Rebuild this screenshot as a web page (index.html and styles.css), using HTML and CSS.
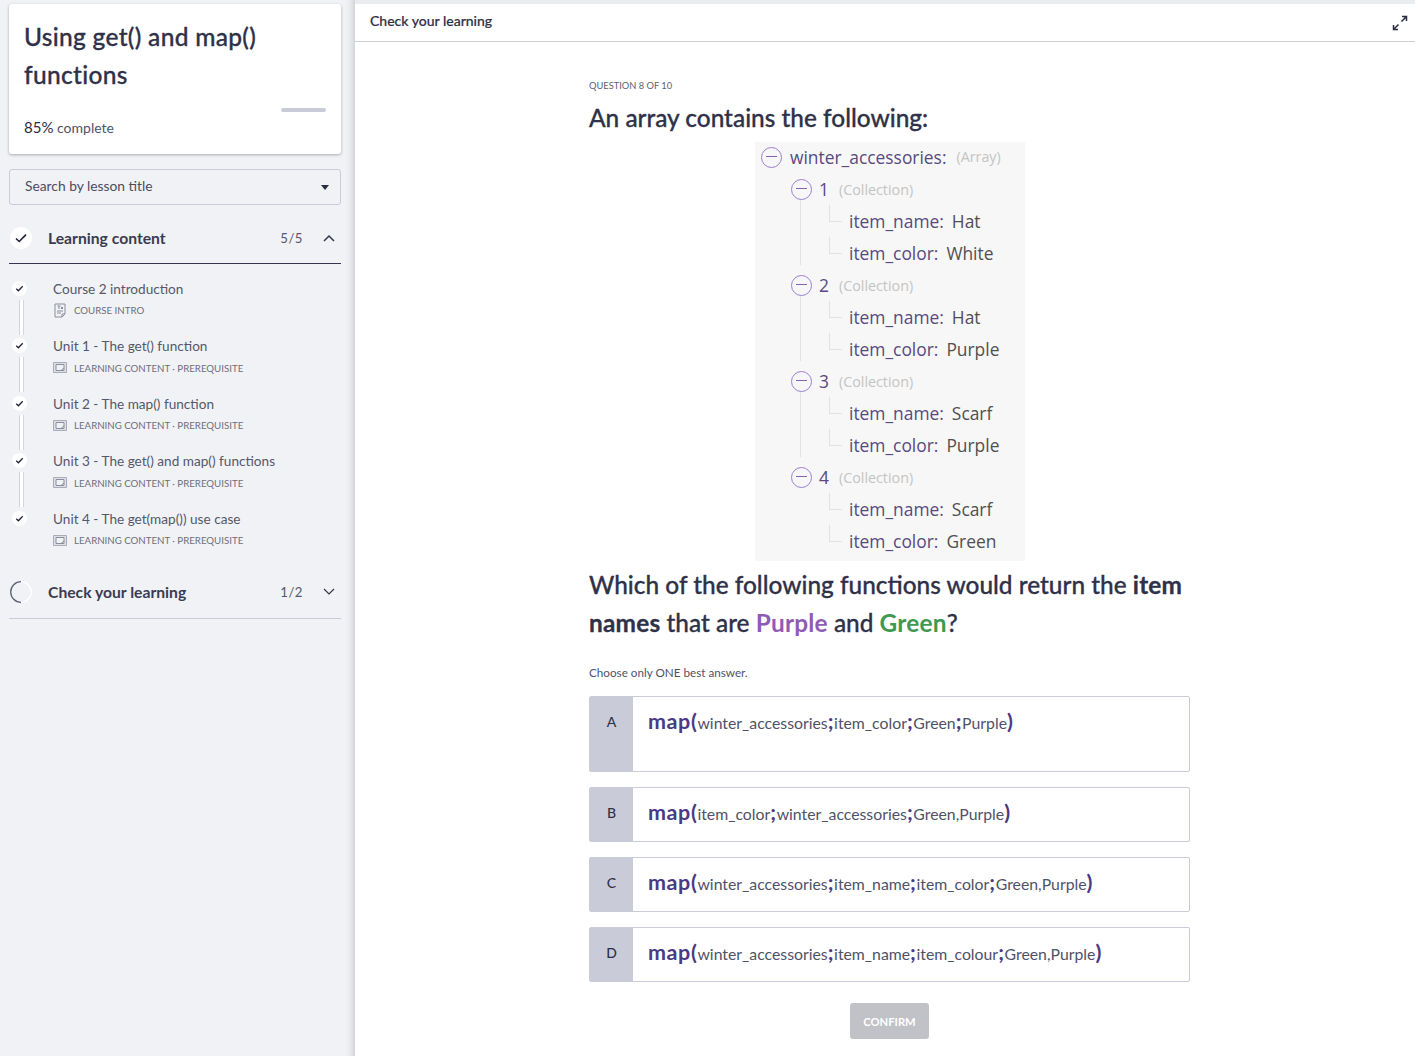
FILE: index.html
```html
<!DOCTYPE html>
<html lang="en">
<head>
    <meta charset="UTF-8">
    <title>Check your learning</title>
    <link rel="stylesheet" href="styles.css">
</head>
<body>
    <aside class="sidebar">
        <div class="course-card">
            <h1>Using get() and map() functions</h1>
            <div class="progress"><span class="progress-rest"></span></div>
            <p class="progress-text"><b>85%</b> complete</p>
        </div>
        <div class="search">
            <span>Search by lesson title</span>
            <i class="caret"></i>
        </div>

        <div class="section-head open">
            <span class="status done">
                <svg width="14" height="14" viewBox="0 0 14 14"><path d="M2 7.5l3.2 3L12 3.6" fill="none" stroke="#1d1f33" stroke-width="1.6"/></svg>
            </span>
            <span class="section-title">Learning content</span>
            <span class="section-count">5/5</span>
            <svg class="chevron" width="14" height="10" viewBox="0 0 14 10"><path d="M2 8l5-5 5 5" fill="none" stroke="#33364d" stroke-width="1.5"/></svg>
        </div>
        <ul class="lessons">
            <li>
                <span class="dot"><svg width="9" height="9" viewBox="0 0 14 14"><path d="M2 7.5l3.2 3L12 3.6" fill="none" stroke="#1d1f33" stroke-width="2"/></svg></span>
                <div class="lesson-title">Course 2 introduction</div>
                <div class="lesson-meta">
                    <svg width="14" height="15" viewBox="0 0 14 15"><path d="M2 1h10v10l-3 3H2z M9 14v-3h3 M4 8h6 M4 10h4 M4.5 3h3 M6 3v3 M8 4l2 2 M10 4l-2 2" fill="none" stroke="#8b8d9e" stroke-width="1"/></svg>
                    <span>COURSE INTRO</span>
                </div>
            </li>
            <li>
                <span class="dot"><svg width="9" height="9" viewBox="0 0 14 14"><path d="M2 7.5l3.2 3L12 3.6" fill="none" stroke="#1d1f33" stroke-width="2"/></svg></span>
                <div class="lesson-title">Unit 1 - The get() function</div>
                <div class="lesson-meta">
                    <svg width="14" height="11" viewBox="0 0 14 11"><path d="M.5.5h13v10H.5z" fill="#dfe0e6" stroke="#a9abb9"/><path d="M3 2.5h8v6H3z M8 8.5l3-2.5" fill="#f1f2f5" stroke="#8b8d9e"/></svg>
                    <span>LEARNING CONTENT · PREREQUISITE</span>
                </div>
            </li>
            <li>
                <span class="dot"><svg width="9" height="9" viewBox="0 0 14 14"><path d="M2 7.5l3.2 3L12 3.6" fill="none" stroke="#1d1f33" stroke-width="2"/></svg></span>
                <div class="lesson-title">Unit 2 - The map() function</div>
                <div class="lesson-meta">
                    <svg width="14" height="11" viewBox="0 0 14 11"><path d="M.5.5h13v10H.5z" fill="#dfe0e6" stroke="#a9abb9"/><path d="M3 2.5h8v6H3z M8 8.5l3-2.5" fill="#f1f2f5" stroke="#8b8d9e"/></svg>
                    <span>LEARNING CONTENT · PREREQUISITE</span>
                </div>
            </li>
            <li>
                <span class="dot"><svg width="9" height="9" viewBox="0 0 14 14"><path d="M2 7.5l3.2 3L12 3.6" fill="none" stroke="#1d1f33" stroke-width="2"/></svg></span>
                <div class="lesson-title">Unit 3 - The get() and map() functions</div>
                <div class="lesson-meta">
                    <svg width="14" height="11" viewBox="0 0 14 11"><path d="M.5.5h13v10H.5z" fill="#dfe0e6" stroke="#a9abb9"/><path d="M3 2.5h8v6H3z M8 8.5l3-2.5" fill="#f1f2f5" stroke="#8b8d9e"/></svg>
                    <span>LEARNING CONTENT · PREREQUISITE</span>
                </div>
            </li>
            <li>
                <span class="dot"><svg width="9" height="9" viewBox="0 0 14 14"><path d="M2 7.5l3.2 3L12 3.6" fill="none" stroke="#1d1f33" stroke-width="2"/></svg></span>
                <div class="lesson-title">Unit 4 - The get(map()) use case</div>
                <div class="lesson-meta">
                    <svg width="14" height="11" viewBox="0 0 14 11"><path d="M.5.5h13v10H.5z" fill="#dfe0e6" stroke="#a9abb9"/><path d="M3 2.5h8v6H3z M8 8.5l3-2.5" fill="#f1f2f5" stroke="#8b8d9e"/></svg>
                    <span>LEARNING CONTENT · PREREQUISITE</span>
                </div>
            </li>
        </ul>

        <div class="section-head closed">
            <span class="status">
                <svg width="22" height="22" viewBox="0 0 22 22"><circle cx="11" cy="11" r="10.3" fill="none" stroke="#fff" stroke-width="1.2"/><path d="M11 .7A10.3 10.3 0 0 0 11 21.3" fill="none" stroke="#5b5e72" stroke-width="1.3"/></svg>
            </span>
            <span class="section-title">Check your learning</span>
            <span class="section-count">1/2</span>
            <svg class="chevron" width="14" height="10" viewBox="0 0 14 10"><path d="M2 2l5 5 5-5" fill="none" stroke="#33364d" stroke-width="1.2"/></svg>
        </div>
    </aside>

    <main class="main">
        <header class="topbar">
            <span>Check your learning</span>
            <svg width="16" height="16" viewBox="0 0 16 16"><path d="M9.5 6.5L14.5 1.5 M10 1.5h4.5V6 M6.5 9.5l-5 5 M1.5 10v4.5H6" fill="none" stroke="#2b2d42" stroke-width="1.5"/></svg>
        </header>

        <section class="quiz">
            <div class="question-no">QUESTION 8 OF 10</div>
            <h2>An array contains the following:</h2>

            <div class="tree">
                <div class="tree-row root">
                    <span class="minus"></span><span class="key">winter_accessories:</span><span class="type">(Array)</span>
                </div>
                <div class="tree-group">
                    <div class="tree-row coll"><span class="minus"></span><span class="key">1</span><span class="type">(Collection)</span></div>
                    <div class="tree-row leaf"><span class="key">item_name:</span><span class="val">Hat</span></div>
                    <div class="tree-row leaf"><span class="key">item_color:</span><span class="val">White</span></div>
                </div>
                <div class="tree-group">
                    <div class="tree-row coll"><span class="minus"></span><span class="key">2</span><span class="type">(Collection)</span></div>
                    <div class="tree-row leaf"><span class="key">item_name:</span><span class="val">Hat</span></div>
                    <div class="tree-row leaf"><span class="key">item_color:</span><span class="val">Purple</span></div>
                </div>
                <div class="tree-group">
                    <div class="tree-row coll"><span class="minus"></span><span class="key">3</span><span class="type">(Collection)</span></div>
                    <div class="tree-row leaf"><span class="key">item_name:</span><span class="val">Scarf</span></div>
                    <div class="tree-row leaf"><span class="key">item_color:</span><span class="val">Purple</span></div>
                </div>
                <div class="tree-group">
                    <div class="tree-row coll"><span class="minus"></span><span class="key">4</span><span class="type">(Collection)</span></div>
                    <div class="tree-row leaf"><span class="key">item_name:</span><span class="val">Scarf</span></div>
                    <div class="tree-row leaf"><span class="key">item_color:</span><span class="val">Green</span></div>
                </div>
            </div>

            <h2 class="ask">Which of the following functions would return the <b>item</b> <b>names</b> that are <b class="purple">Purple</b> and <b class="green">Green</b>?</h2>
            <p class="hint">Choose only ONE best answer.</p>

            <div class="option tall">
                <div class="letter">A</div>
                <div class="formula"><b>map(</b>winter_accessories<b>;</b>item_color<b>;</b>Green<b>;</b>Purple<b>)</b></div>
            </div>
            <div class="option">
                <div class="letter">B</div>
                <div class="formula"><b>map(</b>item_color<b>;</b>winter_accessories<b>;</b>Green,Purple<b>)</b></div>
            </div>
            <div class="option">
                <div class="letter">C</div>
                <div class="formula"><b>map(</b>winter_accessories<b>;</b>item_name<b>;</b>item_color<b>;</b>Green,Purple<b>)</b></div>
            </div>
            <div class="option">
                <div class="letter">D</div>
                <div class="formula"><b>map(</b>winter_accessories<b>;</b>item_name<b>;</b>item_colour<b>;</b>Green,Purple<b>)</b></div>
            </div>

            <div class="actions"><button class="confirm">CONFIRM</button></div>
        </section>
    </main>
</body>
</html>
```

FILE: styles.css
```css
* {
    box-sizing: border-box;
}
html, body {
    height: 100%;
}
body {
    margin: 0;
    display: flex;
    height: 1056px;
    overflow: hidden;
    background: #fff;
    color: #2b2d42;
    font-family: Lato, "Open Sans", sans-serif;
}

/* sidebar */
.sidebar {
    width: 355px;
    flex-shrink: 0;
    padding: 4px 14px 0 9px;
    background: #f1f2f5;
    box-shadow: inset -10px 0 10px -10px rgba(0, 0, 0, 0.25);
}
.course-card {
    height: 150px;
    padding: 14px 15px 0;
    background: #fff;
    border-radius: 3px;
    box-shadow: 0 1px 3px rgba(0, 0, 0, 0.3);
}
.course-card h1 {
    margin: 0;
    width: 260px;
    font-size: 24.5px;
    line-height: 38px;
    font-weight: 500;
    letter-spacing: 0.3px;
    -webkit-text-stroke: 0.3px #2f3148;
    color: #2f3148;
}
.progress {
    display: flex;
    justify-content: flex-end;
    margin-top: 14px;
    height: 4px;
}
.progress-rest {
    width: 45px;
    background: #c9ccd8;
    border-radius: 2px;
}
.progress-text {
    margin: 5px 0 0;
    font-size: 14px;
    line-height: 20px;
    color: #4f5268;
}
.progress-text b {
    font-weight: 400;
    font-size: 15px;
    color: #2b2d42;
}
.search {
    display: flex;
    align-items: center;
    justify-content: space-between;
    height: 36px;
    margin-top: 15px;
    padding: 0 11px 3px 15px;
    border: 1px solid #c9ccd8;
    border-radius: 3px;
    font-size: 13.8px;
    color: #4a4c62;
}
.caret {
    width: 0;
    height: 0;
    margin-top: 3px;
    border-left: 4px solid transparent;
    border-right: 4px solid transparent;
    border-top: 5px solid #2b2d42;
}
.section-head {
    display: flex;
    align-items: center;
    height: 59px;
    padding: 8px 5px 0 1px;
    border-bottom: 1px solid #33364d;
}
.section-head.closed {
    height: 52px;
    padding-top: 0;
    border-bottom-color: #c9ccd8;
}
.status {
    display: flex;
    align-items: center;
    justify-content: center;
    width: 22px;
    height: 22px;
    margin-right: 16px;
    flex-shrink: 0;
    border-radius: 50%;
}
.status.done {
    background: #fff;
}
.section-title {
    flex: 1;
    font-size: 15.7px;
    font-weight: 700;
    color: #3a3c52;
}
.section-count {
    margin-right: 19px;
    font-size: 13.2px;
    letter-spacing: 0.5px;
    color: #55576b;
}
.lessons {
    list-style: none;
    margin: 0;
    padding: 14.75px 0 8px;
}
.lessons li {
    position: relative;
    height: 57.5px;
    padding-left: 44px;
}
.lessons li:last-child {
    height: 50px;
}
.lessons li:not(:last-child)::after {
    content: "";
    position: absolute;
    left: 10px;
    top: 21px;
    height: 35px;
    width: 3px;
    border-left: 1px solid #d3d5dd;
    border-right: 1px solid #d3d5dd;
    background: #fff;
}
.dot {
    position: absolute;
    left: 3px;
    top: 2px;
    display: flex;
    align-items: center;
    justify-content: center;
    width: 15px;
    height: 15px;
    border-radius: 50%;
    background: #fff;
}
.lesson-title {
    font-size: 13.6px;
    line-height: 20px;
    color: #55576b;
}
.lesson-meta {
    display: flex;
    align-items: center;
    gap: 7px;
    margin-top: 3px;
    height: 17px;
    font-size: 9.7px;
    color: #6c6e80;
}

/* main area */
.main {
    flex: 1;
    padding-top: 4px;
    background: linear-gradient(#ebecee 4px, #fff 4px);
}
.topbar {
    display: flex;
    align-items: center;
    justify-content: space-between;
    height: 38px;
    padding: 0 7px 4px 15px;
    background: #fff;
    border-bottom: 1px solid #cfd0d4;
    font-size: 14px;
    font-weight: 500;
    -webkit-text-stroke: 0.2px #2f3148;
    color: #2f3148;
}
.topbar svg {
    margin-top: 4px;
}
.quiz {
    width: 601px;
    margin-left: 234px;
    padding-top: 36px;
}
.question-no {
    font-size: 9.3px;
    line-height: 15px;
    color: #5e6074;
}
.quiz h2 {
    margin: 6px 0 0;
    font-size: 24.4px;
    line-height: 38px;
    font-weight: 500;
    -webkit-text-stroke: 0.3px #2f3148;
    color: #2f3148;
}
.quiz b {
    font-weight: 700;
    letter-spacing: 0.2px;
}
.quiz h2 .purple {
    color: #8e5cb5;
    -webkit-text-stroke: 0;
}
.quiz h2 .green {
    color: #3d9a50;
    -webkit-text-stroke: 0;
}

/* tree */
.tree {
    width: 270px;
    height: 419px;
    margin: 5px 0 0 166px;
    padding: 0 0 0 6px;
    background: #f7f7f7;
    font-family: "Open Sans", sans-serif;
    font-size: 17.4px;
}
.tree-row {
    display: flex;
    align-items: center;
    height: 32px;
    white-space: nowrap;
}
.tree-row.root {
    height: 31px;
    padding-bottom: 2px;
}
.tree-group {
    position: relative;
    padding-left: 30px;
}
.tree-group:not(:last-child)::before {
    content: "";
    position: absolute;
    left: 39px;
    top: 27px;
    bottom: 4px;
    border-left: 1px solid #e2e2e2;
}
.minus {
    position: relative;
    width: 21px;
    height: 21px;
    margin-right: 8px;
    border: 1.5px solid #9a7fd1;
    border-radius: 50%;
    flex-shrink: 0;
}
.coll .minus {
    margin-right: 7px;
}
.root .minus {
    margin-top: 1px;
}
.minus::after {
    content: "";
    position: absolute;
    left: 4px;
    right: 4px;
    top: 8px;
    border-top: 1.5px solid #7f62b8;
}
.key {
    color: #574a80;
}
.type {
    margin-left: 10px;
    font-size: 14.3px;
    color: #c4c4c4;
}
.leaf {
    position: relative;
    padding-left: 58px;
}
.leaf::before {
    content: "";
    position: absolute;
    left: 38px;
    top: 0;
    width: 12px;
    height: 16px;
    border-left: 1px solid #e2e2e2;
    border-bottom: 1px solid #e2e2e2;
}
.val {
    margin-left: 8px;
    color: #505050;
}

.quiz h2.ask {
    margin-top: 5px;
}
.hint {
    margin: 20px 0 0;
    font-size: 11.7px;
    line-height: 20px;
    color: #4f5268;
}

/* answer options */
.option {
    display: flex;
    height: 55px;
    margin-top: 15px;
    border: 1px solid #c9ccd8;
    border-radius: 2px;
}
.option.tall {
    height: 76px;
    margin-top: 14px;
}
.letter {
    width: 43px;
    flex-shrink: 0;
    padding-top: 17px;
    background: #c9ccd8;
    text-align: center;
    font-size: 14px;
    line-height: 16px;
    font-weight: 500;
    color: #2f3148;
}
.formula {
    padding: 10px 0 0 15px;
    font-size: 15.8px;
    line-height: 28px;
    color: #4f5268;
}
.quiz .formula b {
    font-size: 21.5px;
    letter-spacing: 0.6px;
    color: #4a3a85;
}
.actions {
    display: flex;
    justify-content: center;
    margin-top: 21px;
}
.confirm {
    width: 79px;
    height: 36px;
    padding: 0;
    border: none;
    border-radius: 3px;
    background: #c1c2c8;
    color: #fff;
    font-family: inherit;
    font-size: 11.2px;
    font-weight: 700;
}
```
